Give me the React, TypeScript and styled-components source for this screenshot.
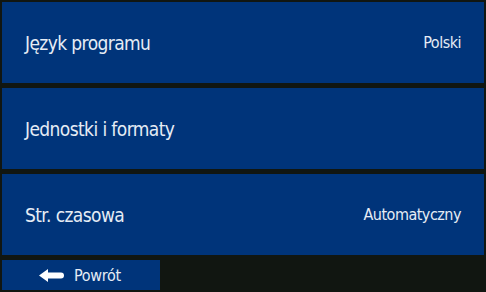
import React from "react";
import styled, { createGlobalStyle } from "styled-components";

const Global = createGlobalStyle`
  html, body { margin: 0; padding: 0; background: #111611; }
  body { width: 486px; height: 292px; overflow: hidden; }
`;

const Screen = styled.div`
  width: 486px;
  height: 292px;
  box-sizing: border-box;
  padding: 2px;
  background: #111611;
  display: flex;
  flex-direction: column;
  gap: 5px;
  font-family: "DejaVu Sans Condensed", "DejaVu Sans", sans-serif;
  color: #e6ecf5;
`;

const Row = styled.div`
  height: 81px;
  background: #00347a;
  display: flex;
  align-items: center;
  justify-content: space-between;
  padding: 0 23px;
  box-sizing: border-box;
`;

const Label = styled.span`
  font-size: 19px;
  letter-spacing: -0.6px;
`;

const Value = styled.span`
  font-size: 16px;
  letter-spacing: -0.5px;
`;

const Footer = styled.div`
  height: 30px;
  display: flex;
`;

const BackButton = styled.div`
  width: 158px;
  height: 30px;
  background: #00347a;
  display: flex;
  align-items: center;
  padding-left: 37px;
  box-sizing: border-box;
  gap: 10px;
  font-size: 16px;
  letter-spacing: -0.3px;
`;

const Arrow = () => (
  <svg width="25" height="13" viewBox="0 0 25 13">
    <path d="M0 6.5 L9 0 L9 3.5 L22 3.5 Q25 3.5 25 6.5 Q25 9.5 22 9.5 L9 9.5 L9 13 Z" fill="#ffffff" />
  </svg>
);

export default function App() {
  return (
    <>
      <Global />
      <Screen>
        <Row>
          <Label>Język programu</Label>
          <Value>Polski</Value>
        </Row>
        <Row>
          <Label>Jednostki i formaty</Label>
        </Row>
        <Row>
          <Label>Str. czasowa</Label>
          <Value>Automatyczny</Value>
        </Row>
        <Footer>
          <BackButton>
            <Arrow />
            <span>Powrót</span>
          </BackButton>
        </Footer>
      </Screen>
    </>
  );
}
